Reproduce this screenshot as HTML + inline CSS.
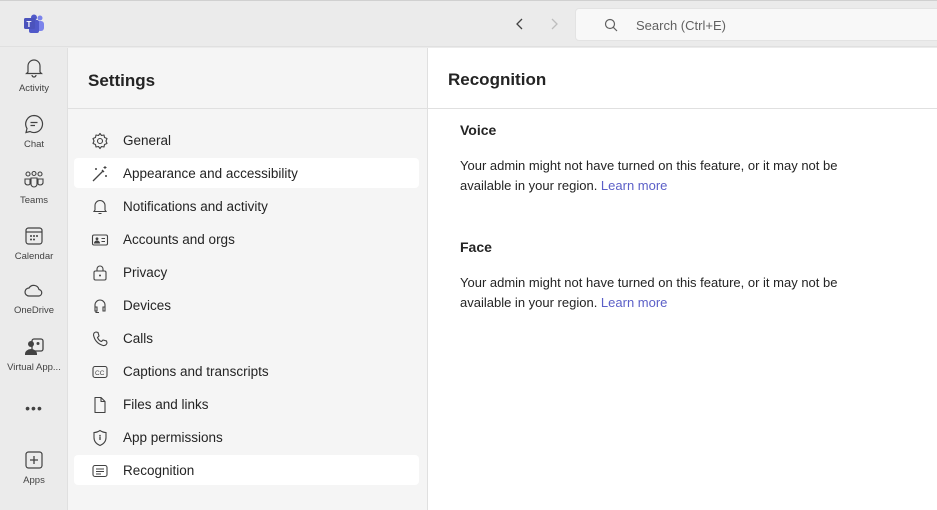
<!DOCTYPE html>
<html><head><style>
*{margin:0;padding:0;box-sizing:border-box}
body{width:937px;height:510px;overflow:hidden;font-family:"Liberation Sans",sans-serif;background:#ebebeb;position:relative;color:#242424}
.top{position:absolute;left:0;top:0;width:937px;height:47px;background:#ebebeb;border-bottom:1px solid #e0e0e0;border-top:1px solid #d0d0d0}
.search{position:absolute;left:575px;top:7px;width:370px;height:33px;background:#f8f8f8;border-radius:4px;border:1px solid #e3e3e3}
.search span{position:absolute;left:60px;top:9px;font-size:13px;color:#616161}
.rail{position:absolute;left:0;top:48px;width:68px;height:462px;background:#ebebeb;border-right:1px solid #e0e0e0}
.ri{position:absolute;left:0;width:68px;text-align:center;font-size:9.5px;color:#424242}
.ri svg{display:block;margin:0 auto 4px}
.set{position:absolute;left:68px;top:48px;width:360px;height:462px;background:#f5f5f5;border-right:1px solid #e0e0e0}
.set h1{position:absolute;left:20px;top:23px;font-size:17px;font-weight:bold}
.set .hl{position:absolute;left:0;top:60px;width:359px;border-top:1px solid #e0e0e0}
.it{position:absolute;left:6px;width:345px;height:30px;border-radius:4px;font-size:13.5px;line-height:31px;padding-left:49px;color:#242424}
.it svg{position:absolute;left:17px;top:7px}
.it.sel{background:#fff}
.main{position:absolute;left:428px;top:48px;width:509px;height:462px;background:#fff}
.main h1{position:absolute;left:20px;top:22px;font-size:17px;font-weight:bold}
.main .hl{position:absolute;left:0;top:60px;width:509px;border-top:1px solid #e0e0e0}
.main h2{position:absolute;left:32px;font-size:14px;font-weight:bold}
.main p{position:absolute;left:32px;width:418px;font-size:13px;line-height:20px;color:#242424}
.main a{color:#5b5fc7;text-decoration:none}
</style></head><body>
<div class="top">
<svg style="position:absolute;left:23px;top:13px" width="22" height="20" viewBox="0 0 22 20"><circle cx="17" cy="4" r="2.5" fill="#7b83eb"/><rect x="13" y="7" width="8" height="10" rx="3" fill="#7b83eb"/><circle cx="11" cy="3.5" r="3" fill="#5059c9"/><rect x="6" y="6" width="10" height="13" rx="2" fill="#5059c9"/><rect x="1" y="4" width="11" height="11" rx="1.5" fill="#4b53bc"/><text x="3.5" y="13" font-size="8" fill="#fff" font-weight="bold" font-family="Liberation Sans">T</text></svg>
<svg style="position:absolute;left:514px;top:16px" width="12" height="14"><path d="M8 2 L3 7 L8 12" fill="none" stroke="#424242" stroke-width="1.3"/></svg>
<svg style="position:absolute;left:548px;top:16px" width="12" height="14"><path d="M4 2 L9 7 L4 12" fill="none" stroke="#bdbdbd" stroke-width="1.3"/></svg>
<div class="search"><svg style="position:absolute;left:28px;top:9px" width="14" height="14"><circle cx="6" cy="6" r="4.5" fill="none" stroke="#616161" stroke-width="1.2"/><path d="M9.3 9.3 L13 13" stroke="#616161" stroke-width="1.2"/></svg><span>Search (Ctrl+E)</span></div>
</div>
<div class="rail">
<div class="ri" style="top:9px"><svg width="22" height="22" viewBox="0 0 22 22"><path d="M5 15 V9 a6 6 0 0 1 12 0 V15 L18.5 16.5 H3.5 Z M9 18 a2 2 0 0 0 4 0" fill="none" stroke="#424242" stroke-width="1.2"/></svg>Activity</div>
<div class="ri" style="top:65px"><svg width="22" height="22" viewBox="0 0 22 22"><path d="M11 2.5 a8.5 8.5 0 1 1 -4 16 L3 19.5 L4 15.5 A8.5 8.5 0 0 1 11 2.5Z M7.5 9.5 H14.5 M7.5 12.5 H12" fill="none" stroke="#424242" stroke-width="1.2"/></svg>Chat</div>
<div class="ri" style="top:121px"><svg width="22" height="22" viewBox="0 0 22 22"><circle cx="5" cy="5" r="2" fill="none" stroke="#424242" stroke-width="1.1"/><circle cx="11" cy="4.5" r="2" fill="none" stroke="#424242" stroke-width="1.1"/><circle cx="17" cy="5" r="2" fill="none" stroke="#424242" stroke-width="1.1"/><path d="M2 10 H7 V15 a3 3 0 0 1 -5 -1Z M8 9 H14 V15 a3 3 0 0 1 -6 0Z M15 10 H20 V14 a3 3 0 0 1 -5 1Z" fill="none" stroke="#424242" stroke-width="1.1"/></svg>Teams</div>
<div class="ri" style="top:177px"><svg width="22" height="22" viewBox="0 0 22 22"><rect x="3" y="3" width="16" height="16" rx="2.5" fill="none" stroke="#424242" stroke-width="1.2"/><path d="M3 7 H19" stroke="#424242" stroke-width="1.2"/><g fill="#424242"><circle cx="8" cy="11" r="1"/><circle cx="11" cy="11" r="1"/><circle cx="14" cy="11" r="1"/><circle cx="8" cy="14.5" r="1"/><circle cx="11" cy="14.5" r="1"/></g></svg>Calendar</div>
<div class="ri" style="top:233px"><svg width="22" height="20" viewBox="0 0 22 20"><path d="M6 15 a4 4 0 0 1 0 -8 a5.5 5.5 0 0 1 10 1.5 a3.3 3.3 0 0 1 0 6.5Z" fill="none" stroke="#424242" stroke-width="1.2"/></svg>OneDrive</div>
<div class="ri" style="top:288px"><svg width="22" height="22" viewBox="0 0 22 22"><rect x="9" y="3" width="11" height="12" rx="2" fill="none" stroke="#424242" stroke-width="1.3"/><circle cx="8" cy="8" r="3" fill="#424242"/><path d="M2 18 a6 5 0 0 1 12 0 V19 H2Z" fill="#424242"/><circle cx="15" cy="7.5" r="1.5" fill="#424242"/></svg>Virtual App...</div>
<div class="ri" style="top:352px;font-size:14px;letter-spacing:1px">•••</div>
<div class="ri" style="top:401px"><svg width="22" height="22" viewBox="0 0 22 22"><rect x="3" y="3" width="16" height="16" rx="2.5" fill="none" stroke="#424242" stroke-width="1.2"/><path d="M11 7 V15 M7 11 H15" stroke="#424242" stroke-width="1.3"/></svg>Apps</div>
</div>
<div class="set">
<h1>Settings</h1><div class="hl"></div>
<div class="it" style="top:77px"><svg width="18" height="18" viewBox="0 0 18 18"><circle cx="9" cy="9" r="2.5" fill="none" stroke="#424242" stroke-width="1.1"/><path d="M9 1.5 L10.5 3.5 L13 3 L13.5 5.5 L16 6.5 L15 9 L16 11.5 L13.5 12.5 L13 15 L10.5 14.5 L9 16.5 L7.5 14.5 L5 15 L4.5 12.5 L2 11.5 L3 9 L2 6.5 L4.5 5.5 L5 3 L7.5 3.5Z" fill="none" stroke="#424242" stroke-width="1.1" stroke-linejoin="round"/></svg>General</div>
<div class="it sel" style="top:110px"><svg width="18" height="18" viewBox="0 0 18 18"><path d="M2 16 L12 6 M11 5 L13 7" stroke="#424242" stroke-width="1.3"/><path d="M14 1 V4 M12.5 2.5 H15.5 M5 3 V5 M4 4 H6 M15 10 V12 M14 11 H16" stroke="#424242" stroke-width="1"/></svg>Appearance and accessibility</div>
<div class="it" style="top:143px"><svg width="18" height="18" viewBox="0 0 18 18"><path d="M4 12 V7.5 a5 5 0 0 1 10 0 V12 L15 13.5 H3 Z M7.5 15.5 H10.5" fill="none" stroke="#424242" stroke-width="1.1"/></svg>Notifications and activity</div>
<div class="it" style="top:176px"><svg width="18" height="18" viewBox="0 0 18 18"><rect x="1.5" y="4" width="15" height="10" rx="1.5" fill="none" stroke="#424242" stroke-width="1.1"/><circle cx="6" cy="7.8" r="1.4" fill="#424242"/><path d="M3.5 12 a2.5 2 0 0 1 5 0Z M10.5 7.5 H14 M10.5 10.5 H14" fill="#424242" stroke="#424242" stroke-width="1"/></svg>Accounts and orgs</div>
<div class="it" style="top:209px"><svg width="18" height="18" viewBox="0 0 18 18"><rect x="3" y="7" width="12" height="9" rx="1.5" fill="none" stroke="#424242" stroke-width="1.1"/><path d="M6 7 V5 a3 3 0 0 1 6 0 V7" fill="none" stroke="#424242" stroke-width="1.1"/><circle cx="9" cy="11.5" r="1" fill="#424242"/></svg>Privacy</div>
<div class="it" style="top:242px"><svg width="18" height="18" viewBox="0 0 18 18"><path d="M4 10 V8 a5 5 0 0 1 10 0 V10 M4 10 h2 v4 h-2Z M12 10 h2 v4 h-2Z M5 14 v1.5 h3" fill="none" stroke="#424242" stroke-width="1.1"/></svg>Devices</div>
<div class="it" style="top:275px"><svg width="18" height="18" viewBox="0 0 18 18"><path d="M5 2 L7 2.5 L8 6 L6.5 7.5 Q8 11 10.5 11.5 L12 10 L15.5 11 L16 13 Q15 16 12 15.5 Q4 13 2.5 5 Q2.5 2.5 5 2Z" fill="none" stroke="#424242" stroke-width="1.1"/></svg>Calls</div>
<div class="it" style="top:308px"><svg width="18" height="18" viewBox="0 0 18 18"><rect x="2" y="3.5" width="14" height="11" rx="2" fill="none" stroke="#424242" stroke-width="1.1"/><text x="4" y="12" font-size="6.5" fill="#424242" font-family="Liberation Sans">CC</text></svg>Captions and transcripts</div>
<div class="it" style="top:341px"><svg width="18" height="18" viewBox="0 0 18 18"><path d="M4 1.5 H10 L14 5.5 V16.5 H4Z M10 1.5 V5.5 H14" fill="none" stroke="#424242" stroke-width="1.1" stroke-linejoin="round"/></svg>Files and links</div>
<div class="it" style="top:374px"><svg width="18" height="18" viewBox="0 0 18 18"><path d="M9 1.5 Q12 3.5 15 3.5 V8.5 Q15 14 9 16.5 Q3 14 3 8.5 V3.5 Q6 3.5 9 1.5Z" fill="none" stroke="#424242" stroke-width="1.1"/><path d="M9 7.5 V11" stroke="#424242" stroke-width="1.3"/><circle cx="9" cy="6.5" r=".8" fill="#424242"/></svg>App permissions</div>
<div class="it sel" style="top:407px"><svg width="18" height="18" viewBox="0 0 18 18"><rect x="2" y="3.5" width="14" height="11" rx="2" fill="none" stroke="#424242" stroke-width="1.1"/><path d="M5 7 H13 M5 9.5 H13 M5 12 H10" stroke="#424242" stroke-width="1"/></svg>Recognition</div>
</div>
<div class="main">
<h1>Recognition</h1><div class="hl"></div>
<h2 style="top:74px">Voice</h2>
<p style="top:108px">Your admin might not have turned on this feature, or it may not be available in your region. <a>Learn more</a></p>
<h2 style="top:191px">Face</h2>
<p style="top:225px">Your admin might not have turned on this feature, or it may not be available in your region. <a>Learn more</a></p>
</div>
</body></html>
